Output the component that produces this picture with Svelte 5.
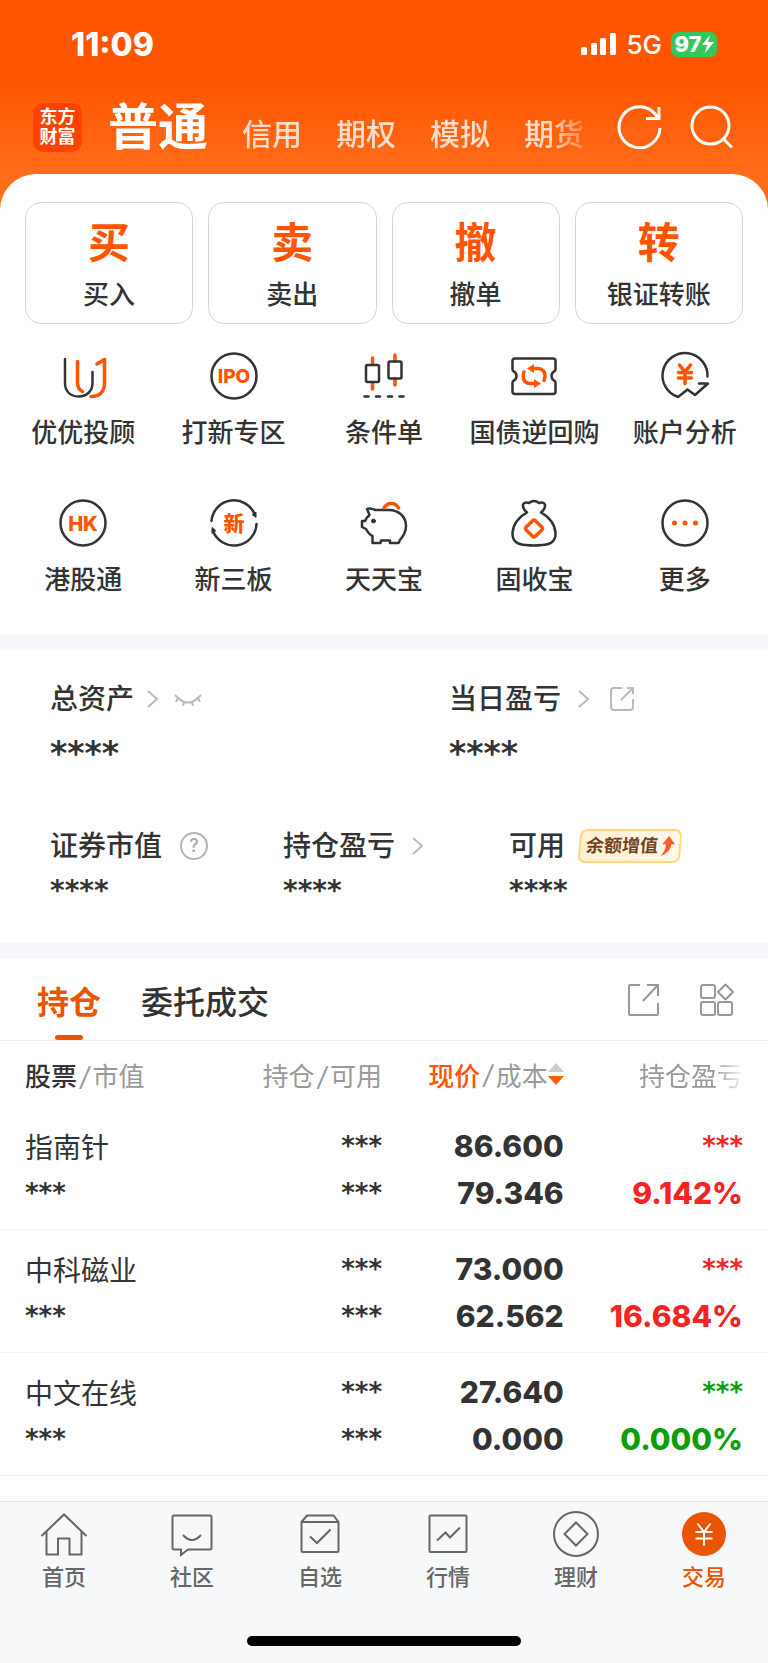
<script lang="ts">
	type Holding = { name: string; price: string; cost: string; rate: string; trend: 'up' | 'flat' };

	const accounts = ['信用', '期权', '模拟', '期货'];

	const actions = [
		{ mark: '买', label: '买入' },
		{ mark: '卖', label: '卖出' },
		{ mark: '撤', label: '撤单' },
		{ mark: '转', label: '银证转账' }
	];

	const tools = [
		{ icon: 'advisor', label: '优优投顾' },
		{ icon: 'ipo', label: '打新专区' },
		{ icon: 'candles', label: '条件单' },
		{ icon: 'ticket', label: '国债逆回购' },
		{ icon: 'analysis', label: '账户分析' },
		{ icon: 'hk', label: '港股通' },
		{ icon: 'neeq', label: '新三板' },
		{ icon: 'pig', label: '天天宝' },
		{ icon: 'bag', label: '固收宝' },
		{ icon: 'more', label: '更多' }
	];

	const holdings: Holding[] = [
		{ name: '指南针', price: '86.600', cost: '79.346', rate: '9.142%', trend: 'up' },
		{ name: '中科磁业', price: '73.000', cost: '62.562', rate: '16.684%', trend: 'up' },
		{ name: '中文在线', price: '27.640', cost: '0.000', rate: '0.000%', trend: 'flat' }
	];

	const pages = [
		{ icon: 'home', label: '首页' },
		{ icon: 'chat', label: '社区' },
		{ icon: 'watch', label: '自选' },
		{ icon: 'market', label: '行情' },
		{ icon: 'wealth', label: '理财' },
		{ icon: 'trade', label: '交易' }
	];

	let currentPage = $state('trade');
	let tab = $state('positions');
</script>

{#snippet toolIcon(name: string)}
	<svg class="tool-icon" width="48" height="48" viewBox="0 0 48 48" aria-hidden="true">
		{#if name === 'advisor'}
			<path d="M6 7V31C6 39 11 44.500 19.500 44.500S33.500 39 33.500 31V20" />
			<path class="hot" d="M18.500 9.500V31Q18.500 37 23.500 39.500M38 12L45.500 7.500V31C45.500 39 41 44.500 32 44.500" />
		{:else if name === 'ipo'}
			<circle cx="24" cy="24" r="22.500" />
			<text x="24" y="31" font-size="19">IPO</text>
		{:else if name === 'candles'}
			<path class="hot" d="M12.500 6V12M12.500 31V37M35 3V9M35 27V33" />
			<rect x="6" y="13" width="13" height="17" rx="1.500" />
			<rect x="28.500" y="9.500" width="13" height="17" rx="1.500" />
			<path d="M4.500 44.500H8.500M16 44.500H20M28 44.500H32M39.500 44.500H43.500" />
		{:else if name === 'ticket'}
			<path d="M5 6.500H43Q45.500 6.500 45.500 9V17.500Q45.500 19 44 19.500Q41.500 21 41.500 24T44 28.500Q45.500 29 45.500 30.500V39.500Q45.500 42 43 42H5Q2.500 42 2.500 39.500V30.500Q2.500 29 4 28.500Q6.500 27 6.500 24T4 19.500Q2.500 19 2.500 17.500V9Q2.500 6.500 5 6.500Z" />
			<path class="hot" d="M14 20Q12 26 15 29.500Q17 31.500 20 31.500H25M34 28.500Q36.500 22 33 18.500Q31 16.500 28 16.500H23" />
			<path class="hot-fill" d="M24 12V21L17 16.500ZM24 27V36L31 31.500Z" />
		{:else if name === 'analysis'}
			<path d="M46.500 24.500A22.500 22.500 0 1 0 17 45L26.500 37.500L34 43L47 31.500H38" />
			<path class="hot" d="M18.500 13L24 20L29.500 13M24 20V31.500M17.500 20.500H30.500M17.500 26H30.500" />
		{:else if name === 'hk'}
			<circle cx="24" cy="24" r="22.500" />
			<text x="24" y="31.500" font-size="20">HK</text>
		{:else if name === 'neeq'}
			<path d="M1.500 22A22.500 22.500 0 0 1 45 16M46.500 25A22.500 22.500 0 0 1 3 32" />
			<path class="dark-fill" d="M42.500 15.500L46 13V18ZM5.500 31.500L2 28.500V34Z" />
			<text x="24" y="31.500" font-size="21">新</text>
		{:else if name === 'pig'}
			<path d="M15.500 11Q10 8.500 7 10L9.500 16Q6.500 18.500 5 22H2V28L6 30Q9 35.500 12.500 37V44H20.500L21 41.500H30V44H38.500L40 41Q46 34 46 27C46 17 38 11 29 11Z" />
			<path class="hot" d="M24 9A8 8 0 0 1 38.500 9" />
			<circle class="dark-fill" cx="13.500" cy="22" r="2" />
		{:else if name === 'bag'}
			<path d="M17 13.500Q12.500 10 13 5.500Q14.500 2.500 19 4Q24 0 29 4Q33.500 2.500 35 5.500Q35.500 10 31 13.500Q44.500 21 45.500 34Q46 45.500 32 46Q24 47 16 46Q2 45.500 2.500 34Q3.500 21 17 13.500Z" />
			<rect class="hot" x="17.500" y="23" width="13" height="13" rx="2" transform="rotate(45 24 29.500)" />
		{:else}
			<circle cx="24" cy="24" r="22.500" />
			<path class="hot dots" d="M13.500 24h.01M24 24h.01M34.500 24h.01" />
		{/if}
	</svg>
{/snippet}

{#snippet pageIcon(name: string)}
	<svg class="page-icon" width="48" height="48" viewBox="0 0 48 48" aria-hidden="true">
		{#if name === 'home'}
			<path d="M1.500 26L24 4.500L46.500 26M6.500 22V44.500H18V28.500H29.500V44.500H41.500V22" />
		{:else if name === 'chat'}
			<path d="M6 5.500H42Q43.500 5.500 43.500 7V38Q43.500 39.500 42 39.500H20L13 45V39.500H6Q4.500 39.500 4.500 38V7Q4.500 5.500 6 5.500Z" />
			<path d="M15 25Q24 35 33 25" />
		{:else if name === 'watch'}
			<path d="M5.500 12L11 5.500H37.500L42.500 12V40.500Q42.500 42 41 42H7Q5.500 42 5.500 40.500ZM5.500 12H42.500M14 26.500L21 33L34.500 19.500" />
		{:else if name === 'market'}
			<rect x="5.500" y="5.500" width="37" height="36.500" rx="1" />
			<path d="M13 30.500L21.500 22.500L26 27.500L36 17.500" />
		{:else if name === 'wealth'}
			<circle cx="24" cy="24" r="22" />
			<path d="M24 12.500L35.500 24L24 35.500L12.500 24Z" />
		{:else}
			<circle class="coin" cx="24" cy="24" r="22" />
			<path class="coin-mark" d="M17.500 13.500L24 22L30.500 13.500M24 22V35.500M15.500 22H32.500M15.500 28.500H32.500" />
		{/if}
	</svg>
{/snippet}

{#snippet chevron()}
	<svg class="line" width="12" height="20" viewBox="0 0 12 20" aria-hidden="true"><path d="M0 2L9 10L0 18" /></svg>
{/snippet}

<div class="app">
	<div class="status">
		<span class="clock">11:09</span>
		<div class="status-right">
			<svg width="36" height="24" viewBox="0 0 36 24" fill="#fff" aria-hidden="true">
				<rect x="0" y="15" width="6" height="8" rx="1.500" />
				<rect x="10" y="11" width="6" height="12" rx="1.500" />
				<rect x="19" y="6" width="6" height="17" rx="1.500" />
				<rect x="29" y="1" width="6" height="22" rx="1.500" />
			</svg>
			<span class="network">5G</span>
			<span class="battery">
				97
				<svg width="12" height="18" viewBox="0 0 12 18" fill="#fff" aria-hidden="true"><path d="M8 0L0 10H5L3 18L12 7H6Z" /></svg>
			</span>
		</div>
	</div>

	<header class="header">
		<a class="logo" href="#home">东方<br />财富</a>
		<nav class="accounts">
			<a class="account active" href="#normal">普通</a>
			{#each accounts as account}
				<a class="account" href="#account">{account}</a>
			{/each}
		</nav>
		<button class="header-button" aria-label="刷新">
			<svg width="44" height="44" viewBox="0 0 44 44" aria-hidden="true">
				<path d="M42 23A20.500 20.500 0 1 1 34 6Q37.500 9 40.500 13.500M41 2V13.500H28" />
			</svg>
		</button>
		<button class="header-button" aria-label="搜索">
			<svg width="44" height="44" viewBox="0 0 44 44" aria-hidden="true">
				<circle cx="20.500" cy="20.500" r="18.500" />
				<path d="M33.500 34L42 42.500" />
			</svg>
		</button>
	</header>

	<main>
		<section class="sheet">
			<div class="actions">
				{#each actions as action}
					<button class="action">
						<span class="mark">{action.mark}</span>
						<span class="label">{action.label}</span>
					</button>
				{/each}
			</div>
			<div class="tools">
				{#each tools as tool}
					<button class="tool">
						{@render toolIcon(tool.icon)}
						<span class="label">{tool.label}</span>
					</button>
				{/each}
			</div>
		</section>

		<section class="assets">
			<div class="totals">
				<div>
					<div class="asset-title">
						总资产
						{@render chevron()}
						<button class="plain" aria-label="显示资产">
							<svg class="line" width="28" height="20" viewBox="0 0 28 20" aria-hidden="true">
								<path d="M1 6Q14 21 27 6M4 9L2 13M10 13L9 17M18 13L19 17M24 9L26 13" />
							</svg>
						</button>
					</div>
					<div class="hidden-value large">****</div>
				</div>
				<div>
					<div class="asset-title">
						当日盈亏
						<span class="spaced">{@render chevron()}</span>
						<button class="plain" aria-label="分享">
							<svg class="line" width="26" height="26" viewBox="0 0 26 26" aria-hidden="true">
								<path d="M13 2H5Q2 2 2 5V21Q2 24 5 24H21Q24 24 24 21V13M18 2H24V8M24 2L12 14" />
							</svg>
						</button>
					</div>
					<div class="hidden-value large">****</div>
				</div>
			</div>
			<div class="details">
				<div>
					<div class="asset-title">
						证券市值
						<button class="plain help" aria-label="说明">?</button>
					</div>
					<div class="hidden-value">****</div>
				</div>
				<div>
					<div class="asset-title">
						持仓盈亏
						<span class="spaced">{@render chevron()}</span>
					</div>
					<div class="hidden-value">****</div>
				</div>
				<div>
					<div class="asset-title">
						可用
						<a class="badge" href="#grow">
							<span>余额增值</span>
							<svg width="15" height="20" viewBox="0 0 16 22" aria-hidden="true">
								<path d="M9 0L16 9H12Q12 18 1 22Q7 16 6 9H2Z" fill="#ff5a2a" />
							</svg>
						</a>
					</div>
					<div class="hidden-value">****</div>
				</div>
			</div>
		</section>

		<section class="positions">
			<div class="tabs">
				<button class="tab" class:active={tab === 'positions'} onclick={() => (tab = 'positions')}>持仓</button>
				<button class="tab" class:active={tab === 'orders'} onclick={() => (tab = 'orders')}>委托成交</button>
				<button class="plain tab-tool first" aria-label="分享持仓">
					<svg width="34" height="34" viewBox="0 0 34 34" aria-hidden="true">
						<path d="M12 2H2Q1 2 1 3V31Q1 32 2 32H29Q30 32 30 31V20M19 2H30V13M30 2L15 18" />
					</svg>
				</button>
				<button class="plain tab-tool" aria-label="更多功能">
					<svg width="34" height="34" viewBox="0 0 34 34" aria-hidden="true">
						<rect x="1" y="2" width="14" height="13" rx="2" />
						<rect x="1" y="19" width="14" height="13" rx="2" />
						<rect x="18" y="19" width="14" height="13" rx="2" />
						<path d="M25.500 1.500L33 9L25.500 16.500L18 9Z" stroke-linejoin="round" />
					</svg>
				</button>
			</div>

			<table>
				<thead>
					<tr>
						<th scope="col"><b>股票</b><i>/</i>市值</th>
						<th scope="col">持仓<i>/</i>可用</th>
						<th scope="col">
							<button class="plain sort">
								<b class="sorted">现价</b><i>/</i>成本
								<svg width="16" height="24" viewBox="0 0 16 24" aria-hidden="true">
									<path d="M8 1L16 10H0Z" fill="#ccc" />
									<path d="M8 23L16 14H0Z" fill="#ff5a0a" />
								</svg>
							</button>
						</th>
						<th scope="col"><span class="fading">持仓盈亏</span></th>
					</tr>
				</thead>
				<tbody>
					{#each holdings as holding}
						<tr>
							<td>
								<div class="name">{holding.name}</div>
								<div class="stars">***</div>
							</td>
							<td>
								<div class="stars">***</div>
								<div class="stars">***</div>
							</td>
							<td>
								<div>{holding.price}</div>
								<div>{holding.cost}</div>
							</td>
							<td class={holding.trend}>
								<div class="stars">***</div>
								<div>{holding.rate}</div>
							</td>
						</tr>
					{/each}
				</tbody>
			</table>
		</section>
	</main>

	<footer class="footer">
		<nav class="pages">
			{#each pages as page}
				<button class="page" class:active={currentPage === page.icon} onclick={() => (currentPage = page.icon)}>
					{@render pageIcon(page.icon)}
					<span>{page.label}</span>
				</button>
			{/each}
		</nav>
		<div class="home-bar"></div>
	</footer>
</div>

<style>
	:global(body) {
		margin: 0;
	}

	.app {
		min-height: 100vh;
		display: flex;
		flex-direction: column;
		background: linear-gradient(#ff5500 80px, #ff6d1a 174px);
		color: #333;
		font-family: Inter, 'Noto Sans CJK SC', sans-serif;
		font-size: 26px;
	}

	button {
		padding: 0;
		border: 0;
		background: none;
		color: inherit;
		font: inherit;
		cursor: pointer;
	}

	a {
		color: inherit;
		text-decoration: none;
	}

	svg {
		display: block;
		flex-shrink: 0;
		overflow: visible;
	}

	main {
		flex: 1;
		background: #fff;
		border-radius: 36px 36px 0 0;
	}

	.status {
		height: 88px;
		padding: 0 51px 0 71px;
		display: flex;
		align-items: center;
		justify-content: space-between;
		color: #fff;
	}

	.clock {
		font-size: 32px;
		font-weight: 800;
	}

	.status-right {
		display: flex;
		align-items: center;
		gap: 9px;
	}

	.network {
		font-weight: 500;
	}

	.battery {
		width: 46px;
		height: 25px;
		display: flex;
		align-items: center;
		justify-content: center;
		border-radius: 7px;
		background: #34c759;
		font-size: 22px;
		font-weight: 800;
	}

	.header {
		height: 86px;
		padding: 0 34px 8px 33px;
		display: flex;
		align-items: center;
		box-sizing: border-box;
		color: #fff;
	}

	.logo {
		width: 49px;
		height: 49px;
		display: flex;
		align-items: center;
		justify-content: center;
		border-radius: 10px;
		background: #ff4200;
		font-size: 18px;
		font-weight: 700;
		line-height: 20px;
	}

	.accounts {
		flex: 1;
		min-width: 0;
		margin: 0 34px 0 26px;
		padding-top: 6px;
		display: flex;
		align-items: baseline;
		gap: 34px;
		overflow: hidden;
		white-space: nowrap;
		mask-image: linear-gradient(90deg, #000 calc(100% - 36px), rgba(0, 0, 0, 0.3));
	}

	.account {
		font-size: 30px;
		font-weight: 500;
		line-height: 60px;
		color: #ffdccb;
	}

	.account.active {
		font-size: 50px;
		font-weight: 700;
		color: #fff;
	}

	.header-button + .header-button {
		margin-left: 28px;
	}

	.header-button svg {
		fill: none;
		stroke: #fff;
		stroke-width: 3;
	}

	.actions {
		padding: 28px 25px 0;
		display: grid;
		grid-template-columns: repeat(4, 1fr);
		gap: 15px;
	}

	.action {
		height: 122px;
		padding-top: 4px;
		display: flex;
		flex-direction: column;
		align-items: center;
		justify-content: center;
		gap: 8px;
		border: 1px solid #d6d6d6;
		border-radius: 16px;
	}

	.mark {
		color: #ff5500;
		font-size: 42px;
		font-weight: 700;
		line-height: 52px;
	}

	.label {
		line-height: 36px;
		font-weight: 500;
		white-space: nowrap;
	}

	.tools {
		padding: 28px 8px 36px;
		display: grid;
		grid-template-columns: repeat(5, 1fr);
		row-gap: 48px;
	}

	.tool {
		display: flex;
		flex-direction: column;
		align-items: center;
		gap: 15px;
	}

	.tool-icon {
		fill: none;
		stroke: #333;
		stroke-width: 2.5;
		stroke-linecap: round;
		stroke-linejoin: round;
	}

	.tool-icon .hot {
		stroke: #ff5500;
		stroke-width: 3.5;
	}

	.tool-icon .dots {
		stroke-width: 5;
	}

	.tool-icon .hot-fill {
		fill: #ff5500;
		stroke: none;
	}

	.tool-icon .dark-fill {
		fill: #333;
		stroke-width: 1;
	}

	.tool-icon text {
		fill: #ff5500;
		stroke: none;
		font-weight: 800;
		text-anchor: middle;
	}

	.assets {
		padding: 29px 25px 27px 50px;
		border-top: 16px solid #f6f7fa;
		border-bottom: 16px solid #f6f7fa;
	}

	.totals {
		display: grid;
		grid-template-columns: 399fr 294fr;
	}

	.details {
		margin-top: 47px;
		display: grid;
		grid-template-columns: 233fr 226fr 234fr;
	}

	.asset-title {
		display: flex;
		align-items: center;
		gap: 14px;
		font-size: 28px;
		font-weight: 500;
		line-height: 40px;
		white-space: nowrap;
	}

	.line {
		fill: none;
		stroke: #bbb;
		stroke-width: 2;
	}

	.spaced {
		margin: 0 4px;
	}

	.help {
		width: 28px;
		height: 28px;
		margin-left: 4px;
		border: 2px solid #b5b5b5;
		border-radius: 50%;
		color: #aaa;
		font-size: 18px;
		line-height: 24px;
	}

	/* DejaVu has the heavy six-armed asterisk */
	.hidden-value,
	.stars {
		font-family: 'DejaVu Sans', sans-serif;
		font-weight: 700;
	}

	.hidden-value {
		font-size: 28px;
		line-height: 50px;
	}

	.hidden-value.large {
		padding-top: 10px;
		font-size: 33px;
	}

	.badge {
		height: 30px;
		padding: 0 4px 0 5px;
		display: flex;
		align-items: center;
		gap: 2px;
		border: 2px solid #ffd77e;
		border-radius: 7px;
		background: linear-gradient(90deg, #fff1d6, #fff8ea);
		transform: skewX(-5deg);
		color: #74431c;
		font-size: 18px;
		font-weight: 700;
		line-height: 30px;
	}

	.tabs {
		height: 81px;
		padding: 0 34px 0 37px;
		display: flex;
		align-items: center;
		border-bottom: 1px solid #eee;
	}

	.tab {
		position: relative;
		height: 81px;
		margin-right: 40px;
		font-size: 32px;
		font-weight: 500;
	}

	.tab.active {
		color: #ea5504;
		font-weight: 700;
	}

	.tab.active::after {
		content: '';
		position: absolute;
		left: 50%;
		bottom: 0;
		width: 28px;
		height: 5px;
		margin-left: -14px;
		border-radius: 3px;
		background: #ea5504;
	}

	.tab-tool {
		margin-left: 38px;
	}

	.tab-tool.first {
		margin-left: auto;
	}

	.tab-tool svg {
		fill: none;
		stroke: #999;
		stroke-width: 2;
	}

	table {
		width: 100%;
		table-layout: fixed;
		border-collapse: collapse;
		text-align: right;
	}

	th,
	td {
		padding: 0;
		width: 23.4%;
	}

	th {
		height: 66px;
		color: #999;
		font-weight: 400;
		white-space: nowrap;
	}

	th:first-child,
	td:first-child {
		width: auto;
		padding-left: 25px;
		text-align: left;
	}

	th:last-child,
	td:last-child {
		width: auto;
		padding-right: 25px;
	}

	th:nth-child(2),
	td:nth-child(2),
	th:nth-child(3),
	td:nth-child(3) {
		padding-right: 2px;
	}

	th b {
		color: #333;
		font-weight: 500;
	}

	th i {
		margin: 0 3px;
	}

	th .sorted {
		color: #ff5500;
	}

	.sort {
		display: inline-flex;
		align-items: center;
		vertical-align: middle;
	}

	.fading {
		mask-image: linear-gradient(90deg, #000 72%, rgba(0, 0, 0, 0.1));
	}

	td {
		padding-top: 16px;
		padding-bottom: 12px;
		border-bottom: 1px solid #f3f3f3;
		font-size: 30px;
		font-weight: 800;
		line-height: 47px;
	}

	td div {
		height: 47px;
	}

	.name {
		font-size: 28px;
		font-weight: 400;
		line-height: 50px;
	}

	.stars {
		font-size: 26px;
	}

	.up {
		color: #f52323;
	}

	.flat {
		color: #0a9f0a;
	}

	.footer {
		height: 161px;
		display: flex;
		flex-direction: column;
		align-items: center;
		justify-content: space-between;
		border-top: 1px solid #e6e6e8;
		background: #f7f8fa;
	}

	.pages {
		width: 100%;
		display: grid;
		grid-template-columns: repeat(6, 1fr);
	}

	.page {
		padding-top: 8px;
		display: flex;
		flex-direction: column;
		align-items: center;
		gap: 3px;
		color: #666;
		font-size: 22px;
		font-weight: 500;
		line-height: 32px;
	}

	.page.active {
		color: #ea5504;
	}

	.page-icon {
		fill: none;
		stroke: #666;
		stroke-width: 2;
	}

	.page-icon .coin {
		fill: #ea5504;
		stroke: none;
	}

	.page-icon .coin-mark {
		stroke: #fff;
	}

	.home-bar {
		width: 274px;
		height: 10px;
		margin-bottom: 17px;
		border-radius: 5px;
		background: #000;
	}
</style>
